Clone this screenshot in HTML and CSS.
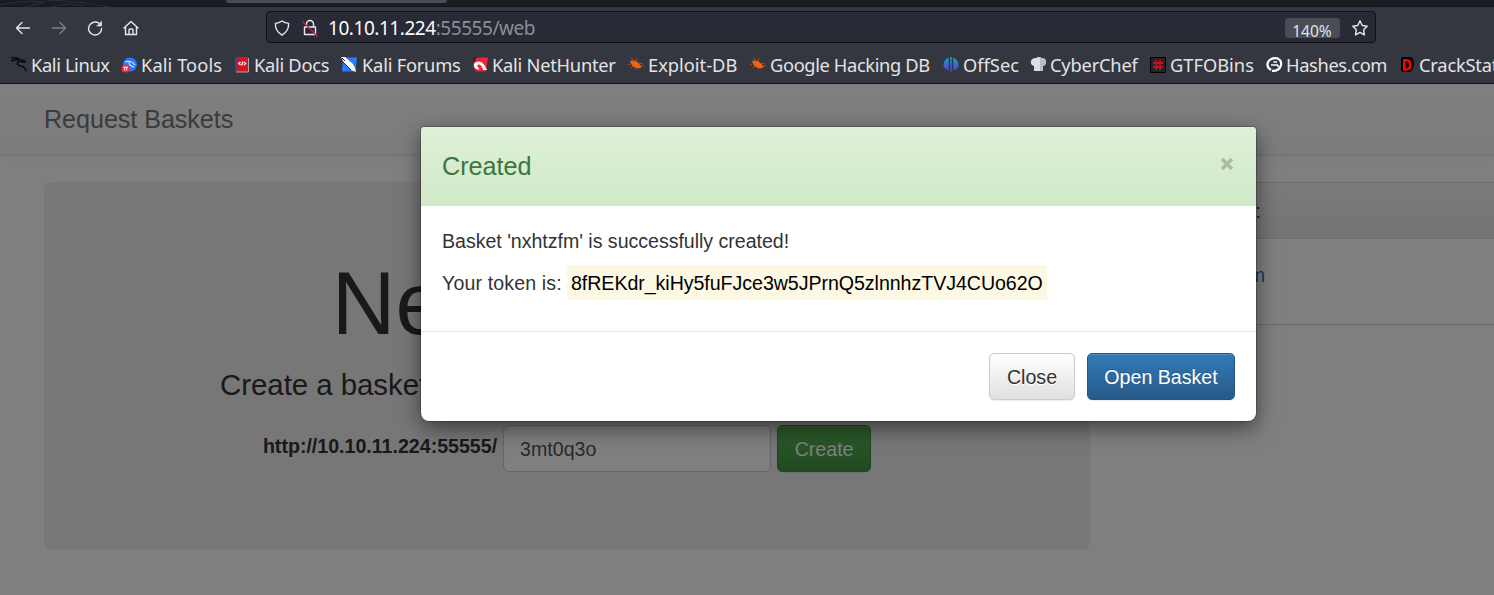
FILE: index.html
```html
<!DOCTYPE html>
<html lang="en">
<head>
<meta charset="utf-8">
<title>Request Baskets</title>
<link rel="stylesheet" href="styles.css">
</head>
<body>
<header class="browser">
  <div class="tabstrip"><svg class="tabart" width="150" height="7" viewBox="0 0 150 7"><path d="M0 5Q22 0 45 2L25 7M47 0Q78 1 110 7M52 7Q68 2 84 6" fill="none" stroke="#282a30" stroke-width="1.5"/></svg><div class="tab"></div></div>
  <div class="toolbar">
    <nav class="navicons">
      <svg width="18" height="18" viewBox="0 0 18 18"><path d="M15.500 9H2.500M8 3.500L2.500 9 8 14.500"/></svg>
      <svg class="dim" width="18" height="18" viewBox="0 0 18 18"><path d="M2.500 9h13M10 3.500L15.500 9 10 14.500"/></svg>
      <svg width="18" height="18" viewBox="0 0 18 18"><path d="M15.600 9.500A6.500 6.500 0 1 1 13 4.300"/><path class="solid" d="M15.500 2.500v4.500h-4.500z"/></svg>
      <svg width="18" height="18" viewBox="0 0 18 18"><path d="M2 9L9 2.500 16 9M3.500 8v7.500h11V8M7 15v-4q0-1 1-1h2q1 0 1 1v4"/></svg>
    </nav>
    <div class="urlbar">
      <svg width="18" height="18" viewBox="0 0 18 18"><path d="M9 2Q12 4.200 15.600 4.400Q16 12 9 16.200Q2 12 2.400 4.400Q6 4.200 9 2z"/></svg>
      <svg class="lock" width="18" height="18" viewBox="0 0 18 18"><path d="M5.500 8V5a3.500 3.500 0 0 1 7 0v3M3.500 8h11v7.500h-11z"/><path class="slash" d="M2 3l14 14"/></svg>
      <span class="url"><b>10.10.11.224</b>:55555/web</span>
      <span class="zoom">140%</span>
      <svg class="star" width="18" height="18" viewBox="0 0 18 18"><path d="M9 1.800l2.200 4.700 5 .7-3.600 3.500.8 5.200L9 13.400l-4.500 2.500.9-5.200L1.800 7.200l5-.7z"/></svg>
    </div>
  </div>
  <div class="bookmarks">
    <span class="tight"><svg width="17" height="18" viewBox="0 0 17 18"><path d="M0 2Q6 1 10 4Q14 4 14 6Q10 5 7 6Q5 9 10 10Q14 11 15 15M0 5q4-2 8-1" fill="none" stroke="#08090b" stroke-width="1.500"/></svg><i>Kali Linux</i></span>
    <span class="wide"><svg width="17" height="18" viewBox="0 0 17 18"><circle cx="9" cy="8.500" r="7" fill="#2777ff"/><path d="M4 6q6-2 10 3M8 6q0 4 5 5" fill="none" stroke="#c8ddff" stroke-width="1.300"/><circle cx="4.500" cy="12.500" r="4" fill="#f22b3d"/><path d="M2.500 11.200h4.500M3.700 11v3.500M5.700 11v3.500" stroke="#fff"/></svg><i>Kali Tools</i></span>
    <span class="docs"><svg width="17" height="18" viewBox="0 0 17 18"><path d="M1 1h12v15H1z" fill="#dd101b"/><path d="M1 1v14" stroke="#24539b" stroke-width="1.500"/><path d="M1 16h12.500V2" fill="none" stroke="#aaa"/><path d="M5.500 6L3.800 7.500l1.700 1.500M9 6l1.700 1.500L9 9M7.800 5.500L6.700 9.500" fill="none" stroke="#fff" stroke-width="1.200"/></svg><i>Kali Docs</i></span>
    <span class="forums"><svg width="17" height="18" viewBox="0 0 17 18"><path d="M2 1.500h14l-1.500 14H1z" fill="#267dff"/><path d="M0 1l4 0 8 7 2 4 1 4-5-2-7-7z" fill="#fff"/><path d="M1 2l3 3M2 6l8 8" fill="none" stroke="#222"/></svg><i>Kali Forums</i></span>
    <span class="hunter"><svg width="17" height="18" viewBox="0 0 17 18"><path d="M3 1.500h13l-2 14H4L1 10z" fill="#ee2439"/><path d="M15 14Q12 6 7 5.500Q1 6 2 10Q3 14 7.500 13.500L6 11Q4 9 7 8.500Q10 9 11 14z" fill="#fff"/><path d="M1 3l4-1.500M1 5l3-1" fill="none" stroke="#111"/></svg><i>Kali NetHunter</i></span>
    <span><svg width="17" height="18" viewBox="0 0 17 18"><path d="M2 5Q8 3 13 10Q14 13 9 12Q4 12 2 5z" fill="#f06214"/><path d="M6 4L3 2M8 5l1-3M2 8L0 9M5 10l-2 2M9 12l-1 2M11 7l4 1M13 10l3 0" stroke="#b94a14"/></svg><i>Exploit-DB</i></span>
    <span class="tight"><svg width="17" height="18" viewBox="0 0 17 18"><path d="M2 5Q8 3 13 10Q14 13 9 12Q4 12 2 5z" fill="#f06214"/><path d="M6 4L3 2M8 5l1-3M2 8L0 9M5 10l-2 2M9 12l-1 2M11 7l4 1M13 10l3 0" stroke="#b94a14"/></svg><i>Google Hacking DB</i></span>
    <span><svg width="17" height="18" viewBox="0 0 17 18"><defs><linearGradient id="g" gradientUnits="userSpaceOnUse" x1="0" y1="1" x2="0" y2="16"><stop stop-color="#10a9c5"/><stop offset="1" stop-color="#6032ce"/></linearGradient></defs><path d="M5.700 1.500v13Q.5 13 .5 8.500T5.700 1.500zM10.300 1.500v13Q15.500 13 15.500 8.500T10.300 1.500zM7.200 1h1.600v15H7.200z" fill="url(#g)"/></svg><i>OffSec</i></span>
    <span class="slight"><svg width="17" height="18" viewBox="0 0 17 18"><path d="M4 15V10Q0 9 1 5q1-3 5-3 3-2 6 0 4 0 4 4 0 3-3 4v5z" fill="#dedede"/><path d="M10 2h2q4 1 4 4 0 3-3 4v5h-3z" fill="#bbb"/></svg><i>CyberChef</i></span>
    <span><svg width="17" height="18" viewBox="0 0 17 18"><path d="M.5 1.500h15v15H.5z" fill="#252527" stroke="#000"/><path d="M6.300 4v10M10 4v10M3 7h10M3 11h10" stroke="#c41018" stroke-width="1.800"/></svg><i>GTFOBins</i></span>
    <span class="tight"><svg width="17" height="18" viewBox="0 0 17 18"><path d="M12 2.300Q5 1 2 6Q0 11 5 14M11 2.300q5 2 4 7-2 6-9 5.500" fill="none" stroke="#fff" stroke-width="2.200"/><path d="M5 9h7M7.500 6H11M12 9v2" fill="none" stroke="#fff" stroke-width="1.600"/></svg><i>Hashes.com</i></span>
    <span class="slight crack"><svg width="17" height="18" viewBox="0 0 17 18"><path d="M3 1h8q3 2 3 7t-4 8H3L1 14V3z" fill="#000"/><path d="M4.300 4.200h2q4 0 4 4.600t-4 4.700h-2z" fill="none" stroke="#f00" stroke-width="2.600"/></svg><i>CrackStation</i></span>
  </div>
</header>
<main class="page">
  <div class="navbar">Request Baskets</div>
  <div class="columns">
    <section class="jumbotron">
      <h1>New Basket</h1>
      <p class="lead">Create a basket to collect and inspect HTTP requests</p>
      <div class="form"><label>http://10.10.11.224:55555/</label><div class="input">3mt0q3o</div><button class="btn success">Create</button></div>
    </section>
    <aside class="panel"><div class="panelhead"><span>Your Baskets:</span></div><div class="panelbody"><a>nxhtzfm</a></div></aside>
  </div>
  <div class="backdrop"></div>
  <div class="modal">
    <div class="modalhead"><h4>Created</h4><svg width="14" height="14" viewBox="0 0 14 14"><path d="M2 2l10 10M12 2L2 12" stroke="#000" stroke-width="3.600"/></svg></div>
    <div class="modalbody"><p class="made">Basket 'nxhtzfm' is successfully created!</p><p class="tokenline"><span class="tokenlabel">Your token is:</span><mark>8fREKdr_kiHy5fuFJce3w5JPrnQ5zlnnhzTVJ4CUo62O</mark></p></div>
    <div class="modalfoot"><button class="btn default">Close</button><button class="btn primary">Open Basket</button></div>
  </div>
</main>
</body>
</html>
```
FILE: styles.css
```css
*{box-sizing:border-box}
body{margin:0;width:1494px;height:595px;overflow:hidden;font:19.6px/28px "Liberation Sans",Arial,sans-serif;color:#333;background:#fff}
.browser{height:84px;background:#34373f;border-bottom:1px solid #0f1015;font-family:"Noto Sans",sans-serif;color:#e3e3e4}
.tabstrip{height:7px;background:#1b1c21;border-bottom:1px solid #15161a;display:flex}
.tabart{flex:none;margin-right:76px}
.tab{width:221px;height:3px;background:#4a4c53;border-radius:0 0 4px 4px}
.toolbar{height:40px;display:flex;align-items:center}
.toolbar svg{fill:none;stroke:#e8e8ea;stroke-width:1.4;stroke-linecap:round;stroke-linejoin:round;flex:none}
.toolbar .solid{fill:#e8e8ea;stroke-width:.6}
.toolbar .dim{opacity:.4}
.navicons{display:flex;gap:18px;padding:1px 0 0 14px;width:266px}
.urlbar{width:1110px;height:32px;background:#282a36;border:1px solid #101116;border-radius:4px;display:flex;align-items:center;padding:1px 6px 0}
.toolbar .lock{margin-left:10px}
.toolbar .slash{stroke:#e31246}
.url{font-size:19px;margin-left:9px;color:#8d8e94;letter-spacing:-.45px;padding-top:1px}
.url b{font-weight:400;color:#fbfbfb}
.zoom{margin-left:auto;width:55px;height:20px;background:#494b55;border-radius:3px;font-size:15.500px;line-height:20px;padding:3px 1px 0 0;text-align:center}
.toolbar .star{margin-left:11px}
.bookmarks{display:grid;grid-template-columns:110px 114px 106px 131px 156px 122px 193px 87px 120px 116px 134px 140px;padding-left:11px;height:35px}
.bookmarks span{display:flex;align-items:center;gap:3px;font-size:18.300px;white-space:nowrap}
.bookmarks .tight{letter-spacing:-.37px}
.bookmarks .slight{letter-spacing:-.2px}
.bookmarks .docs{letter-spacing:-.28px;gap:2px}
.bookmarks .forums{letter-spacing:-.22px;gap:4px}
.bookmarks .hunter{letter-spacing:-.25px}
.bookmarks .wide{letter-spacing:.08px}
.bookmarks .crack{gap:2px}
.bookmarks svg{flex:none}
.bookmarks i{font-style:normal}
.page{position:relative;height:511px;overflow:hidden}
.navbar{height:71px;padding:21px 44px;font-size:25.200px;letter-spacing:-.08px;color:#777;background:linear-gradient(#fff,#f8f8f8);border-bottom:1px solid #e7e7e7;box-shadow:0 1px 7px rgba(0,0,0,.075)}
.columns{display:flex;gap:21px;padding:27px 0 0 44px}
.jumbotron{width:1046px;height:368px;flex:none;background:#eee;border-radius:8px;text-align:center;padding-top:73px}
h1{font-size:88.200px;line-height:97px;font-weight:400;margin:0}
.lead{font-size:29.400px;line-height:41px;margin:12px 0 20px;letter-spacing:-.03px}
.form{display:flex;justify-content:center;gap:6px}
.form label{font-weight:700;line-height:42px}
.input{width:268px;height:47px;border:1px solid #ccc;border-radius:6px;background:#fff;padding:9px 16px;text-align:left;color:#555;box-shadow:inset 0 1px 2px rgba(0,0,0,.08)}
.btn{font:inherit;height:47px;border:1px solid;border-radius:5px;padding:0;text-align:center;box-shadow:inset 0 1px 0 rgba(255,255,255,.15),0 1px 1px rgba(0,0,0,.075)}
.success{width:94px;color:#fff;background:linear-gradient(#5cb85c,#419641);border-color:#3e8f3e;text-shadow:0 -1px 0 rgba(0,0,0,.2)}
.panel{width:480px;height:143px;flex:none;border:1px solid #ddd;border-radius:5px;box-shadow:0 1px 2px rgba(0,0,0,.05)}
.panelhead{height:56px;background:linear-gradient(#f5f5f5,#e8e8e8);border-bottom:1px solid #ddd;padding:14px 21px}
.panelhead span{display:block;width:128px;text-align:right}
.panelbody{padding:22px 21px}
.panelbody a{display:block;width:132px;text-align:right;color:#337ab7}
.backdrop{position:absolute;inset:0;background:rgba(0,0,0,.5)}
.modal{position:absolute;left:421px;top:43px;width:835px;height:294px;background:#fff;border-radius:4px 4px 8px 8px;box-shadow:0 0 0 1px rgba(0,0,0,.2),0 7px 21px rgba(0,0,0,.5)}
.modalhead{height:79px;border-radius:4px 4px 0 0;background:linear-gradient(#dff0d8,#d0e9c6);display:flex;justify-content:space-between;padding:21px 22px 0 21px}
.modalhead h4{font-size:25.200px;line-height:36px;font-weight:400;color:#3c763d;margin:0}
.modalhead svg{opacity:.2;margin-top:9px}
.modalbody{height:126px;padding:21px;border-bottom:1px solid #e5e5e5}
.modalbody p{margin:0;white-space:nowrap}
.modalbody .made{letter-spacing:-.03px}
.modalbody .tokenline{display:flex;align-items:center;margin-top:10px;height:35px}
.tokenlabel{width:125px;letter-spacing:.13px}
mark{background:#fcf8e3;color:#000;height:35px;width:480px;padding:4px;letter-spacing:-.045px}
.modalfoot{display:flex;justify-content:flex-end;gap:12px;padding:21px}
.default{width:86px;color:#333;background:linear-gradient(#fff,#e0e0e0);border-color:#ccc;text-shadow:0 1px 0 #fff}
.primary{width:148px;color:#fff;background:linear-gradient(#337ab7,#265a88);border-color:#245580;text-shadow:0 -1px 0 rgba(0,0,0,.2)}
```
